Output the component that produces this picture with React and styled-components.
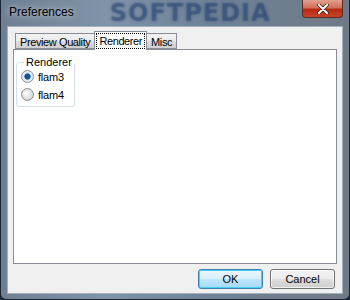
import React from 'react';
import styled, { createGlobalStyle } from 'styled-components';

const Global = createGlobalStyle`
  html, body { margin: 0; padding: 0; background: #1c2a3c; }
  body { font-family: "Liberation Sans", Arial, sans-serif; font-size: 11px; color: #000; }
`;

function App() {
  return (
    <>
      <Global />
      <Window>
        <TitleBar>
          <Title>Preferences</Title>
          <Watermark>SOFTPEDIA</Watermark>
          <CloseButton>
            <svg width="12" height="10" viewBox="0 0 12 10">
              <path d="M2 1 L10 9 M10 1 L2 9" stroke="#3a1410" strokeWidth="3.4" strokeLinecap="round" />
              <path d="M2 1 L10 9 M10 1 L2 9" stroke="#fff" strokeWidth="2" strokeLinecap="round" />
            </svg>
          </CloseButton>
        </TitleBar>
        <Client>
          <TabStrip>
            <Tab>Preview Quality</Tab>
            <Tab $active><Focus>Renderer</Focus></Tab>
            <Tab>Misc</Tab>
          </TabStrip>
          <Panel>
            <GroupBox>
              <Legend>Renderer</Legend>
              <Option>
                <Radio $checked />
                flam3
              </Option>
              <Option>
                <Radio />
                flam4
              </Option>
            </GroupBox>
          </Panel>
          <ButtonRow>
            <Button $default>OK</Button>
            <Button>Cancel</Button>
          </ButtonRow>
        </Client>
      </Window>
    </>
  );
}

export default App;

const Window = styled.div`
  width: 350px;
  height: 300px;
  box-sizing: border-box;
  display: flex;
  flex-direction: column;
  background: linear-gradient(90deg, #6f7f93 0%, #8093a8 30%, #6e8298 60%, #707a86 100%);
  border: 1px solid #1a2433;
  border-top: none;
  border-radius: 0 0 6px 6px;
  padding: 0 6px 7px 6px;
`;

const TitleBar = styled.div`
  height: 26px;
  display: flex;
  align-items: center;
  flex-shrink: 0;
`;

const Title = styled.div`
  font-family: "Liberation Sans", Arial, sans-serif;
  font-size: 12px;
  color: #000;
  padding-left: 2px;
  margin-top: -2px;
  text-shadow: 0 0 6px rgba(255,255,255,0.8);
`;

const Watermark = styled.div`
  margin-left: 36px;
  font-family: "DejaVu Sans", sans-serif;
  font-weight: bold;
  font-size: 24px;
  line-height: 26px;
  letter-spacing: 1px;
  color: rgba(30, 60, 110, 0.28);
  text-shadow: 0 0 3px rgba(30, 60, 110, 0.5);
`;

const CloseButton = styled.div`
  margin-left: auto;
  align-self: flex-start;
  width: 41px;
  height: 18px;
  box-sizing: border-box;
  border: 1px solid #5b2a22;
  border-top: none;
  border-radius: 0 0 4px 4px;
  background: linear-gradient(180deg, #e0a090 0%, #d2705a 45%, #b52a12 55%, #c8452a 100%);
  display: flex;
  align-items: center;
  justify-content: center;
`;

const Client = styled.div`
  flex: 1;
  display: flex;
  flex-direction: column;
  background: #f0f0f0;
  border: 1px solid #a6b0bb;
  padding: 6px 5px 4px 5px;
`;

const TabStrip = styled.div`
  display: flex;
  align-items: flex-end;
  height: 16px;
  padding-left: 2px;
  position: relative;
  z-index: 1;
`;

const Tab = styled.div`
  height: ${p => (p.$active ? '19px' : '16px')};
  box-sizing: border-box;
  padding: ${p => (p.$active ? '2px 2px 0' : '2px 4px 0')};
  margin: ${p => (p.$active ? '0 -1px -1px' : '0')};
  border: 1px solid #898c95;
  border-bottom: ${p => (p.$active ? 'none' : '1px solid #898c95')};
  background: ${p => (p.$active ? '#fff' : 'linear-gradient(180deg, #f2f2f2 0%, #ebebeb 50%, #dddddd 51%, #cfcfcf 100%)')};
  font-size: 11px;
  letter-spacing: -0.4px;
  line-height: 12px;
  z-index: ${p => (p.$active ? 2 : 1)};
  & + & { border-left: ${p => (p.$active ? '1px solid #898c95' : 'none')}; }
`;

const Focus = styled.span`
  display: inline-block;
  outline: 1px dotted #000;
  padding: 1px 2px;
  font-size: 11px;
`;

const Panel = styled.div`
  height: 215px;
  box-sizing: border-box;
  background: #fff;
  border: 1px solid #898c95;
  padding: 7px 0 0 2px;
`;

const GroupBox = styled.fieldset`
  width: 58px;
  height: 50px;
  box-sizing: border-box;
  margin: 0;
  border: 1px solid #d5dfe5;
  border-radius: 3px;
  padding: 3px 0 0 4px;
  display: flex;
  flex-direction: column;
  gap: 5px;
`;

const Legend = styled.legend`
  font-size: 11px;
  padding: 0 2px;
  margin-left: 3px;
  line-height: 10px;
`;

const Option = styled.div`
  display: flex;
  align-items: center;
  gap: 4px;
  font-size: 11px;
  letter-spacing: -0.2px;
  height: 13px;
`;

const Radio = styled.span`
  width: 13px;
  height: 13px;
  box-sizing: border-box;
  border-radius: 50%;
  border: 1px solid #8e8f8f;
  background: ${p => (p.$checked
    ? 'radial-gradient(circle, #1a4f8a 0 2.5px, #3f8bd6 3px, #dbe7f2 3.5px, #f4f4f4 100%)'
    : 'radial-gradient(circle at 40% 40%, #ffffff 0%, #dcdcdc 60%, #c8c8c8 100%)')};
`;

const ButtonRow = styled.div`
  display: flex;
  justify-content: flex-end;
  gap: 7px;
  padding-top: 5px;
  padding-right: 2px;
`;

const Button = styled.div`
  width: 65px;
  height: 20px;
  box-sizing: border-box;
  border: 1px solid ${p => (p.$default ? '#3c7fb1' : '#707070')};
  border-radius: 3px;
  background: ${p => (p.$default
    ? 'linear-gradient(180deg, #eaf6fd 0%, #d9f0fc 50%, #bee6fd 51%, #a7d9f5 100%)'
    : 'linear-gradient(180deg, #f2f2f2 0%, #ebebeb 50%, #dddddd 51%, #cfcfcf 100%)')};
  box-shadow: inset 0 0 0 1px ${p => (p.$default ? '#48d0fb' : 'rgba(255,255,255,0.7)')};
  display: flex;
  align-items: center;
  justify-content: center;
  font-size: 11px;
`;
